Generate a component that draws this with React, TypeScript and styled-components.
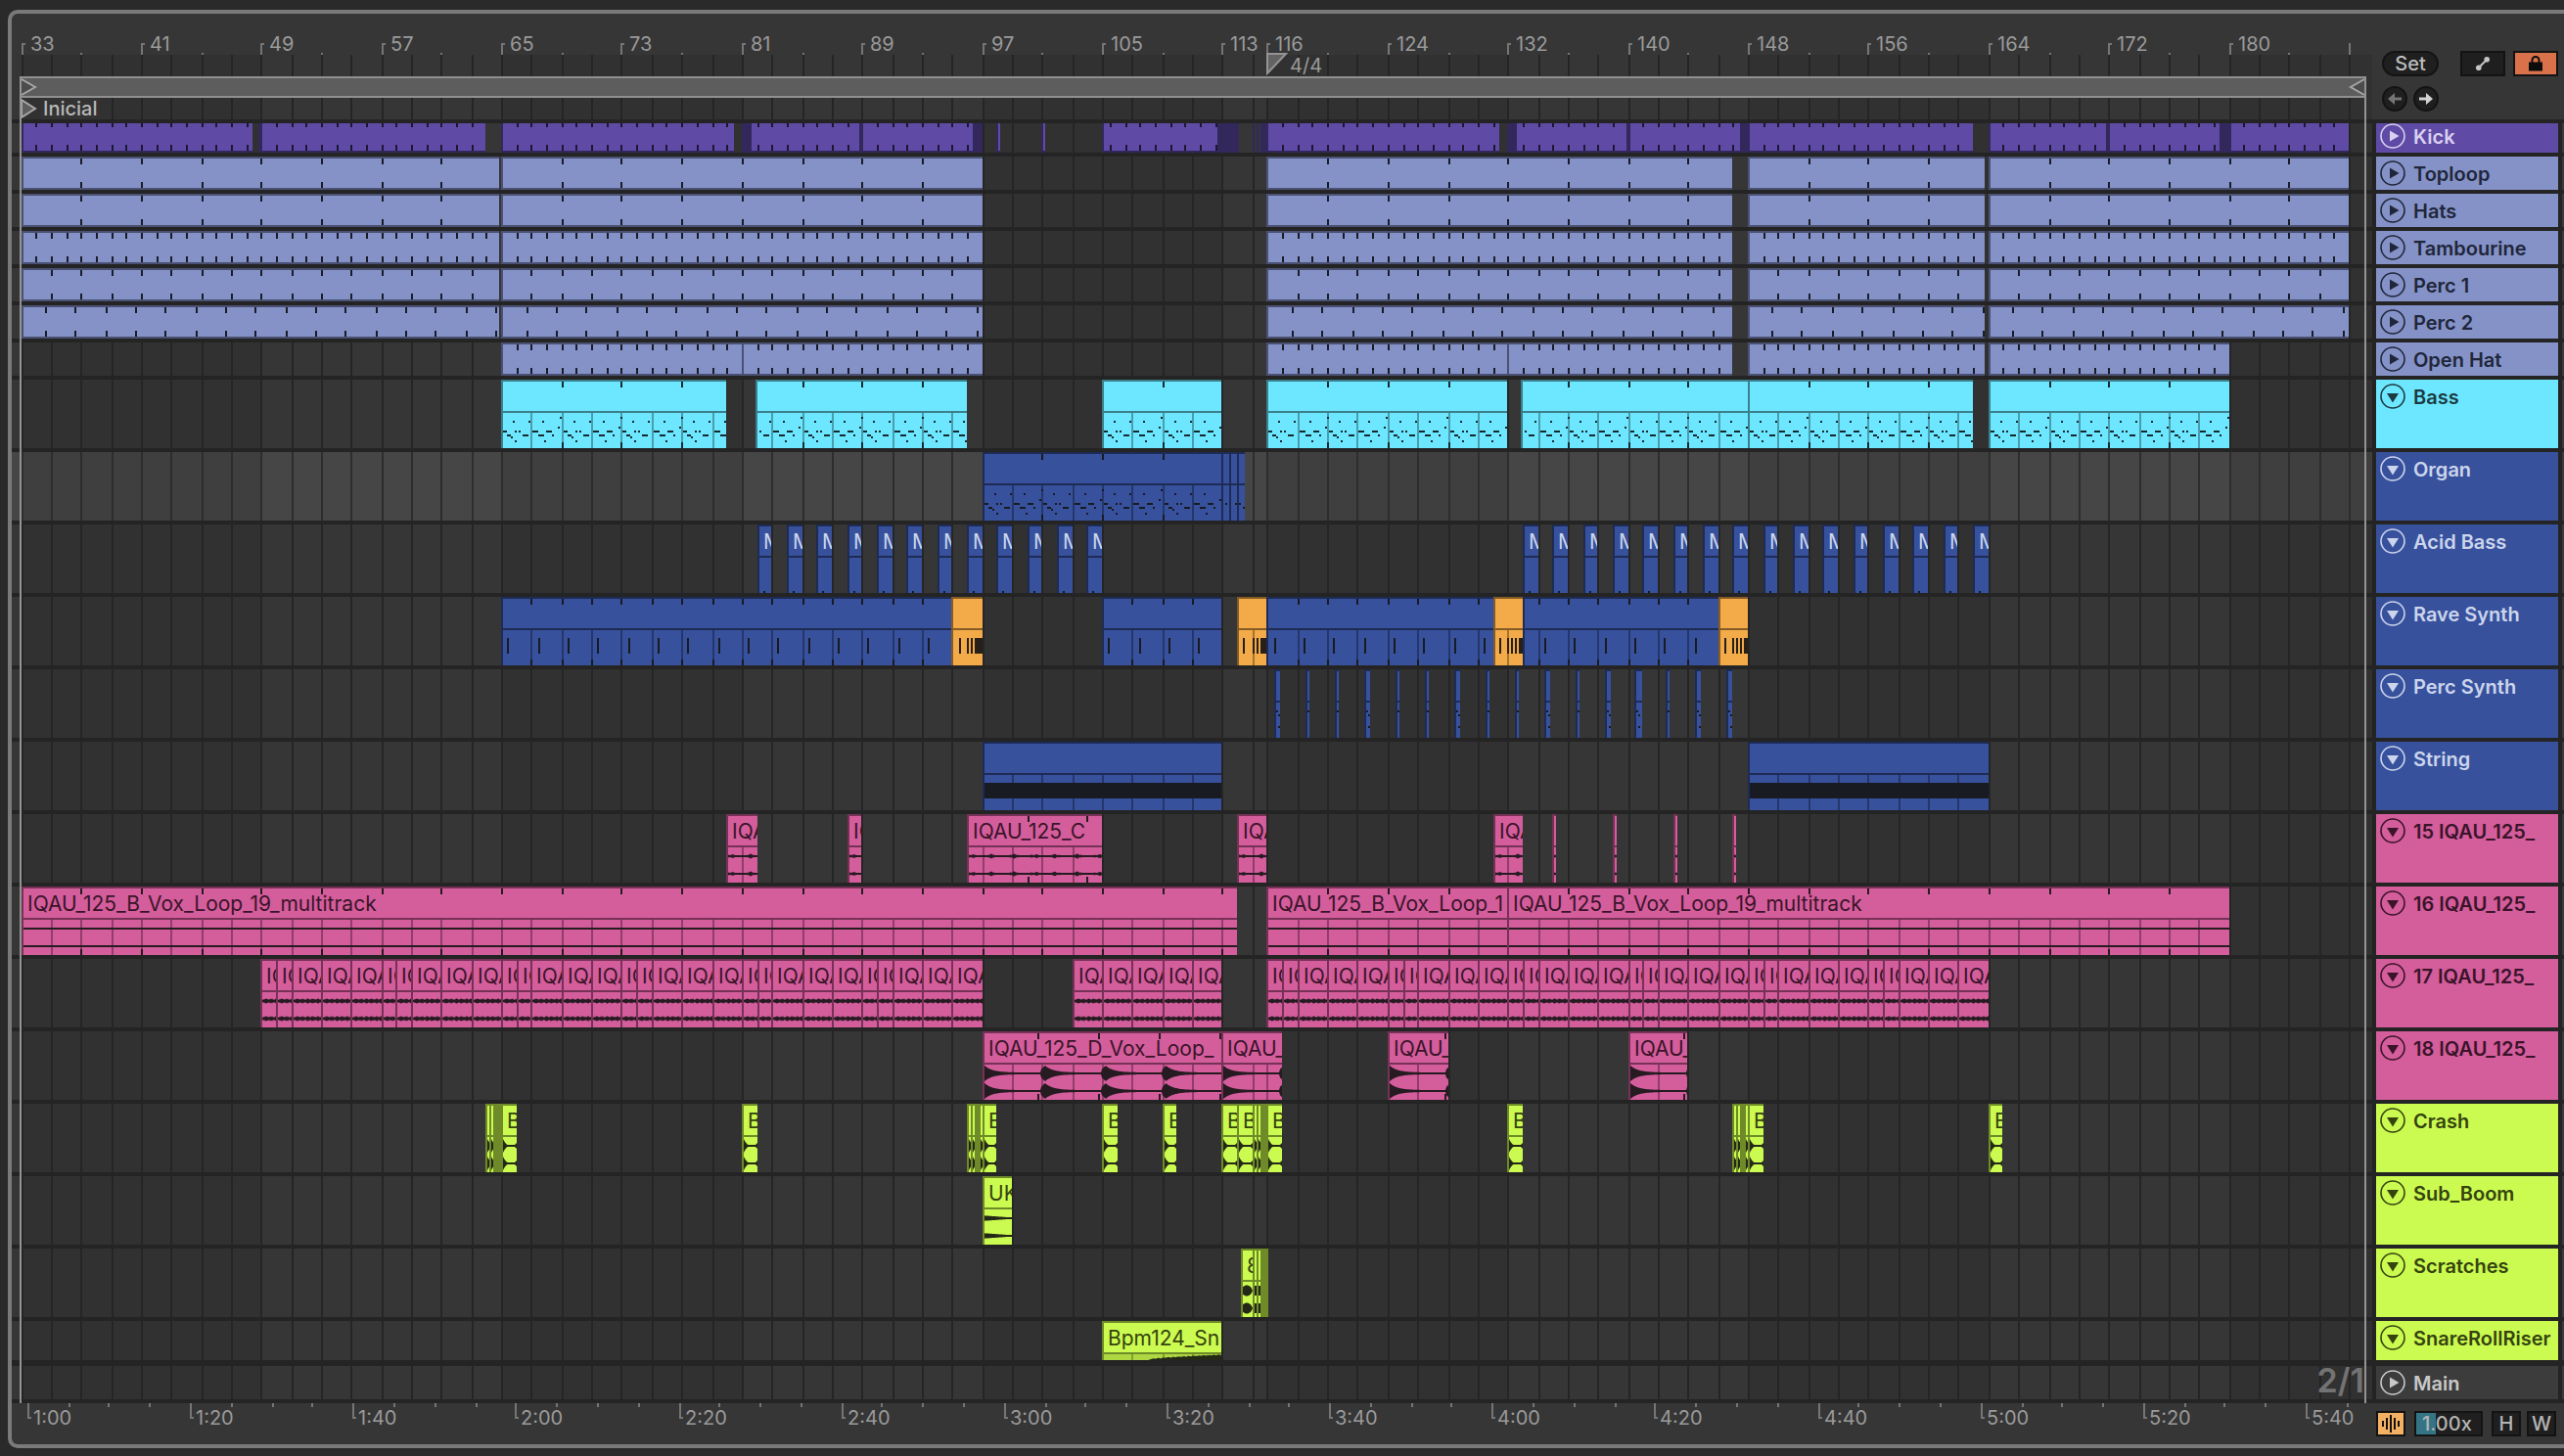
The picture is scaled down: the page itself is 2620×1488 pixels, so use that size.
import React, { createContext, useContext, useLayoutEffect, useRef, useState } from 'react';
import styled, { createGlobalStyle } from 'styled-components';

/* ---------- palette ---------- */

type Hue = 'purple' | 'lavender' | 'cyan' | 'blue' | 'orange' | 'pink' | 'lime' | 'grey';

const HUES: Record<Hue, { fill: string; edge: string; text: string; ink: string }> = {
  purple: { fill: '#5f4ba6', edge: '#33285c', text: '#d9d0f0', ink: '#1b1730' },
  lavender: { fill: '#8592c7', edge: '#4a5172', text: '#20263a', ink: '#181c28' },
  cyan: { fill: '#6de7ff', edge: '#3a7f8c', text: '#1b3b42', ink: '#16292e' },
  blue: { fill: '#37519d', edge: '#1d2b55', text: '#ccd5ec', ink: '#191b22' },
  orange: { fill: '#f3aa48', edge: '#855c24', text: '#3b2a12', ink: '#262019' },
  pink: { fill: '#d45d9c', edge: '#763156', text: '#3a1429', ink: '#251b20' },
  lime: { fill: '#cbfb50', edge: '#6f8a28', text: '#35430f', ink: '#242817' },
  grey: { fill: '#3c3c3c', edge: '#242424', text: '#c8c8c8', ink: '#c8c8c8' },
};

const FONT = 'Inter, "Liberation Sans", sans-serif';

/* ---------- time axis ---------- */

const FIRST_BAR = 33;
const VISIBLE_BARS = 156.5;
const LEAD_IN = 10;
const SIDE_WIDTH = 196;

const snap = (v: number) => 2 * Math.floor(v / 2);
const Axis = createContext<{ x: (bar: number) => number; width: number }>({ x: (b) => b, width: 0 });

const range = (from: number, to: number, step: number) => {
  const out: number[] = [];
  for (let v = from; v < to - 0.001; v += step) out.push(v);
  return out;
};

const GRID_BARS = [...range(33, 116, 2), ...range(116, 189, 2)];
const LIGHT_BANDS: [number, number][] = [
  [49, 65],
  [81, 97],
  [113, 116],
  [132, 148],
  [164, 180],
];

/* ---------- clips ---------- */

type Art =
  | 'none'
  | 'riff'
  | 'dot'
  | 'stab'
  | 'roll'
  | 'blips'
  | 'drone'
  | 'vox'
  | 'flat'
  | 'chop'
  | 'burst'
  | 'crash'
  | 'boom'
  | 'blob'
  | 'rise';

interface Clip {
  from: number;
  to: number;
  label?: string;
  hue?: Hue;
  art?: Art;
  step?: number;
  anchor?: number;
  marks?: number[];
  stub?: boolean;
}

interface Track {
  name: string;
  hue: Hue;
  height: number;
  folded?: boolean;
  selected?: boolean;
  lift?: number;
  clips: Clip[];
}

const spans = (pairs: [number, number][], extra: Partial<Clip> = {}): Clip[] =>
  pairs.map(([from, to]) => ({ from, to, ...extra }));

const LOOP_SPANS: [number, number][] = [
  [33, 64.9],
  [65, 97],
  [116, 147],
  [148, 163.75],
  [164, 188],
];

const kickClips: Clip[] = [
  ...spans(
    [
      [33, 48.5],
      [49, 64],
      [65, 80.5],
      [89, 96.4],
      [116, 131.5],
      [140, 147.45],
      [148, 163],
      [164, 171.8],
      [172, 179.4],
      [180, 188],
    ],
    { step: 1 }
  ),
  { from: 81.5, to: 88.8, step: 1, anchor: 81 },
  { from: 132.5, to: 139.9, step: 1, anchor: 132 },
  { from: 105, to: 112.65, step: 1, anchor: 104.5 },
  { from: 97.9, to: 98.2 },
  { from: 101, to: 101.2 },
  ...spans(
    [
      [48.8, 49],
      [81, 81.5],
      [88.8, 89],
      [96.4, 97],
      [112.65, 114.1],
      [115, 115.1],
      [115.25, 115.4],
      [115.5, 116],
      [132, 132.5],
      [139.9, 140],
      [147.45, 148],
      [171.8, 172],
      [179.4, 180],
    ],
    { stub: true }
  ),
];

const perc2Clips: Clip[] = LOOP_SPANS.map(([from, to]) => ({
  from,
  to,
  step: 2,
  anchor: from + (from < 148 ? 1.62 : 1.58) - 2,
}));

const rollMarks = [
  [8, 16, 20, 24, 26, 28, 30],
  [6, 16, 20, 24, 26, 28],
  [6, 14, 18, 22, 26, 28],
  [6, 14, 18, 22, 26, 28],
];

const raveClips: Clip[] = [
  { from: 65, to: 95, art: 'stab', step: 2 },
  { from: 95, to: 97, hue: 'orange', art: 'roll', marks: rollMarks[0] },
  { from: 105, to: 113, art: 'stab', step: 2 },
  { from: 114, to: 116, hue: 'orange', art: 'roll', marks: rollMarks[1] },
  { from: 116, to: 131, art: 'stab', step: 2 },
  { from: 131, to: 133, hue: 'orange', art: 'roll', marks: rollMarks[2] },
  { from: 133, to: 146, art: 'stab', step: 2, anchor: 132 },
  { from: 146, to: 148, hue: 'orange', art: 'roll', marks: rollMarks[3] },
];

const WIDE_BLIPS = [0, 3, 6, 9, 11, 12, 14, 15];
const blipClips: Clip[] = range(0, 16, 1).map((i) => ({
  from: 116.5 + i * 2,
  to: 116.5 + i * 2 + (WIDE_BLIPS.includes(i) ? 0.4 : 0.27),
  art: 'blips',
}));

const chopStarts = (from: number, to: number) => {
  const edges = range(from, to, 8).flatMap((b) => [b, b + 1, b + 2, b + 4, b + 6]);
  return edges.map((b, i): [number, number] => [b, edges[i + 1] ?? to]);
};

const chops = (pairs: [number, number][]): Clip[] =>
  pairs.map(([from, to]) => ({ from, to, art: 'chop', label: to - from > 1 ? 'IQA' : 'IQ' }));

const hits = (bars: number[]): Clip[] => bars.map((b) => ({ from: b, to: b + 1, label: 'B', art: 'crash' }));
const flam = (bar: number): Clip[] => [
  { from: bar, to: bar + 0.25, art: 'crash' },
  { from: bar + 0.25, to: bar + 0.5, art: 'crash' },
  { from: bar + 0.5, to: bar + 0.8, stub: true },
  { from: bar + 0.8, to: bar + 1, art: 'crash' },
];

const VOX_B = 'IQAU_125_B_Vox_Loop_19_multitrack';

const TRACKS: Track[] = [
  { name: 'Kick', hue: 'purple', height: 30, lift: 4, folded: true, clips: kickClips },
  { name: 'Toploop', hue: 'lavender', height: 34, folded: true, clips: spans(LOOP_SPANS, { step: 4 }) },
  { name: 'Hats', hue: 'lavender', height: 34, folded: true, clips: spans(LOOP_SPANS, { step: 4 }) },
  { name: 'Tambourine', hue: 'lavender', height: 34, folded: true, clips: spans(LOOP_SPANS, { step: 1 }) },
  { name: 'Perc 1', hue: 'lavender', height: 34, folded: true, clips: spans(LOOP_SPANS, { step: 2 }) },
  { name: 'Perc 2', hue: 'lavender', height: 34, folded: true, clips: perc2Clips },
  {
    name: 'Open Hat',
    hue: 'lavender',
    height: 34,
    folded: true,
    clips: spans(
      [
        [65, 81],
        [81, 97],
        [116, 132],
        [132, 147],
        [148, 163.75],
        [164, 180],
      ],
      { step: 1 }
    ),
  },
  {
    name: 'Bass',
    hue: 'cyan',
    height: 70,
    clips: [
      ...spans(
        [
          [65, 80],
          [105, 113],
          [116, 132],
          [148, 163],
          [164, 180],
        ],
        { step: 4, art: 'riff' }
      ),
      { from: 81.9, to: 96, step: 4, anchor: 81, art: 'riff' },
      { from: 132.9, to: 148, step: 4, anchor: 132, art: 'riff' },
    ],
  },
  {
    name: 'Organ',
    hue: 'blue',
    height: 70,
    selected: true,
    clips: [
      { from: 97, to: 113, step: 4, art: 'riff' },
      { from: 113, to: 113.5, art: 'riff', anchor: 112 },
      { from: 113.5, to: 114, art: 'riff', anchor: 111.7 },
      { from: 114, to: 114.5, art: 'riff', anchor: 113 },
    ],
  },
  {
    name: 'Acid Bass',
    hue: 'blue',
    height: 70,
    clips: [...range(82, 105, 2), ...range(133, 164, 2)].map((b) => ({
      from: b,
      to: b + 1,
      label: 'M',
      art: 'dot' as Art,
    })),
  },
  { name: 'Rave Synth', hue: 'blue', height: 70, clips: raveClips },
  { name: 'Perc Synth', hue: 'blue', height: 70, clips: blipClips },
  {
    name: 'String',
    hue: 'blue',
    height: 70,
    clips: spans(
      [
        [97, 113],
        [148, 164],
      ],
      { art: 'drone' }
    ),
  },
  {
    name: '15 IQAU_125_',
    hue: 'pink',
    height: 70,
    clips: [
      { from: 88, to: 89, label: 'IQ', art: 'vox' },
      { from: 96, to: 105, label: 'IQAU_125_C', art: 'vox', step: 4 },
      ...spans(
        [
          [80, 82],
          [114, 116],
          [131, 133],
        ],
        { label: 'IQA', art: 'vox' }
      ),
      ...[135, 139, 143, 147].map((b) => ({ from: b, to: b + 0.27, art: 'vox' as Art })),
    ],
  },
  {
    name: '16 IQAU_125_',
    hue: 'pink',
    height: 70,
    clips: [
      { from: 33, to: 114, label: VOX_B, art: 'flat', step: 4 },
      { from: 116, to: 132, label: 'IQAU_125_B_Vox_Loop_1', art: 'flat', step: 4 },
      { from: 132, to: 180, label: VOX_B, art: 'flat', step: 4 },
    ],
  },
  {
    name: '17 IQAU_125_',
    hue: 'pink',
    height: 70,
    clips: chops([
      ...chopStarts(49, 97),
      ...range(103, 113, 2).map((b): [number, number] => [b, b + 2]),
      ...chopStarts(116, 164),
    ]),
  },
  {
    name: '18 IQAU_125_',
    hue: 'pink',
    height: 70,
    clips: [
      { from: 97, to: 113, label: 'IQAU_125_D_Vox_Loop_', art: 'burst', step: 4.03, anchor: 96.68 },
      { from: 113, to: 117, label: 'IQAU_', art: 'burst' },
      { from: 124, to: 128, label: 'IQAU_', art: 'burst', step: 4, anchor: 123.75 },
      { from: 140, to: 144, label: 'IQAU_', art: 'burst', step: 4, anchor: 139.7 },
    ],
  },
  {
    name: 'Crash',
    hue: 'lime',
    height: 70,
    clips: [
      ...[64, 96, 115, 147].flatMap(flam),
      ...hits([65, 81, 97, 105, 109, 113, 114, 116, 132, 148, 164]),
    ],
  },
  { name: 'Sub_Boom', hue: 'lime', height: 70, clips: [{ from: 97, to: 99, label: 'UK', art: 'boom' }] },
  {
    name: 'Scratches',
    hue: 'lime',
    height: 70,
    clips: [
      { from: 114.2, to: 115, label: '8', art: 'blob' },
      { from: 115, to: 115.25, art: 'blob' },
      { from: 115.25, to: 115.5, art: 'blob' },
      { from: 115.5, to: 116.1, stub: true },
    ],
  },
  {
    name: 'SnareRollRiser',
    hue: 'lime',
    height: 40,
    clips: [{ from: 105, to: 113, label: 'Bpm124_Sn', art: 'rise' }],
  },
];

/* ---------- page ---------- */

const GlobalStyle = createGlobalStyle`
  *, *::before, *::after { box-sizing: border-box; }
  body { margin: 0; background: #2a2a2a; font-family: ${FONT}; }
`;

const Page = styled.main`
  min-height: 100vh;
  padding: 10px 0 8px 8px;
  overflow: hidden;
`;

const Frame = styled.div`
  border: 4px solid #7a7a7a;
  border-right: 0;
  border-radius: 10px 0 0 10px;
  background: #363636;
  overflow: hidden;
`;

const Arrangement = styled.section`
  position: relative;
`;

const Split = styled.div`
  display: flex;
`;

const TimeColumn = styled.div`
  flex: 1;
  min-width: 0;
`;

const RangeLine = styled.i`
  position: absolute;
  top: 64px;
  bottom: 0;
  width: 2px;
  background: #939393;
`;

/* ---------- rulers ---------- */

const BeatRuler = styled.div`
  position: relative;
  height: 64px;
  padding-top: 42px;
`;

const Strip = styled.div`
  position: relative;
  height: 22px;
`;

const LoopStrip = styled(Strip)`
  padding-left: 8px;
`;

const LoopBrace = styled.div`
  position: relative;
  display: flex;
  justify-content: space-between;
  height: 22px;
  border-top: 2px solid #909090;
  border-bottom: 2px solid #909090;
  background: #5d5d5d;
`;

const Overlay = styled.svg`
  position: absolute;
  top: 0;
  left: 0;
  width: 100%;
  height: 100%;
  display: block;
`;

const RulerLabel = styled.span<{ $top: number }>`
  position: absolute;
  top: ${(p) => p.$top}px;
  font-size: 20px;
  line-height: 24px;
  color: #9a9a9a;
  white-space: nowrap;
`;

const Locator = styled.div`
  position: relative;
  display: flex;
  align-items: center;
  gap: 4px;
  height: 22px;
  padding-left: 10px;
`;

const LocatorName = styled.span`
  padding: 0 2px;
  font-size: 20px;
  font-weight: 500;
  line-height: 22px;
  color: #b8b8b8;
  background: #333333;
`;

const TimeRuler = styled.div`
  position: relative;
  flex: 1;
  height: 42px;
`;

/* ---------- side panel ---------- */

const SideTop = styled.div`
  display: flex;
  flex-direction: column;
  gap: 10px;
  width: ${SIDE_WIDTH}px;
  padding: 38px 6px 8px 10px;
`;

const ButtonRow = styled.div<{ $gap: number }>`
  display: flex;
  gap: ${(p) => p.$gap}px;
`;

const PillButton = styled.button`
  width: 58px;
  height: 26px;
  margin-right: auto;
  padding: 0;
  border: 2px solid #131313;
  border-radius: 13px;
  background: #1f1f1f;
  color: #bdbdbd;
  font: 500 20px/22px ${FONT};
`;

const BoxButton = styled.button<{ $width: number; $active?: string }>`
  display: flex;
  align-items: center;
  justify-content: center;
  width: ${(p) => p.$width}px;
  height: 26px;
  padding: 0;
  border: 2px solid #131313;
  background: ${(p) => p.$active ?? '#1f1f1f'};
  color: #b5b5b5;
  font: 500 20px/22px ${FONT};
`;

const RoundButton = styled.button`
  display: flex;
  align-items: center;
  justify-content: center;
  width: 26px;
  height: 26px;
  padding: 0;
  border: 2px solid #131313;
  border-radius: 50%;
  background: #1f1f1f;
`;

const SideBottom = styled.div`
  display: flex;
  width: ${SIDE_WIDTH}px;
  padding: 8px 8px 0 4px;
  justify-content: space-between;
`;

const ZoomField = styled.input`
  width: 70px;
  height: 26px;
  padding: 0 0 0 6px;
  border: 2px solid #131313;
  border-radius: 0;
  outline: 0;
  background: linear-gradient(90deg, #347485 20px, #1f1f1f 20px);
  color: #b5b5b5;
  font: 500 20px/22px ${FONT};
`;

/* ---------- tracks ---------- */

const TrackList = styled.div`
  display: flex;
  flex-direction: column;
  gap: 4px;
  padding: 4px 0;
  background: #242424;
`;

const Row = styled.div<{ $height: number; $apart?: boolean }>`
  display: flex;
  height: ${(p) => p.$height}px;
  margin-top: ${(p) => (p.$apart ? 2 : 0)}px;
`;

const Lane = styled.div`
  position: relative;
  flex: 1;
  min-width: 0;
  overflow: hidden;
`;

const Lift = styled.div<{ $by: number }>`
  position: absolute;
  inset: ${(p) => -p.$by}px 0 0 0;
`;

const TrackHead = styled.div<{ $hue: Hue; $lift: number }>`
  display: flex;
  align-items: flex-start;
  gap: 8px;
  width: 186px;
  margin: 0 4px;
  padding: ${(p) => 4 - p.$lift}px 0 0 4px;
  overflow: hidden;
  background: ${(p) => HUES[p.$hue].fill};
  color: ${(p) => HUES[p.$hue].text};
`;

const RowEnd = styled.div`
  width: 2px;
  background: #3a3a3a;
`;

const FoldButton = styled.button`
  flex: none;
  width: 26px;
  height: 26px;
  padding: 0;
  border: 0;
  background: none;
  color: inherit;
`;

const TrackName = styled.span`
  font-size: 20px;
  font-weight: 600;
  line-height: 28px;
  white-space: nowrap;
`;

const ZoomRatio = styled.span`
  position: absolute;
  right: 8px;
  top: 0;
  font-size: 34px;
  font-weight: 600;
  line-height: 30px;
  color: #737373;
`;

const ClipBox = styled.div<{ $hue: Hue; $tall: boolean; $stub?: boolean }>`
  position: absolute;
  top: 0;
  height: ${(p) => (p.$tall ? 70 : 34)}px;
  overflow: hidden;
  border: solid ${(p) => HUES[p.$hue].edge};
  border-width: ${(p) => (p.$tall ? '2px 0 0 2px' : '2px 0 2px 2px')};
  background: ${(p) => (p.$stub ? HUES[p.$hue].edge : HUES[p.$hue].fill)};
`;

const ClipTitle = styled.div<{ $hue: Hue }>`
  height: 32px;
  padding-left: 4px;
  overflow: hidden;
  border-bottom: 2px solid ${(p) => HUES[p.$hue].edge};
  color: ${(p) => HUES[p.$hue].text};
  font-size: 21px;
  line-height: 31px;
  white-space: nowrap;
`;

const ClipArt = styled.svg`
  position: absolute;
  top: -2px;
  left: -2px;
  display: block;
`;

/* ---------- clip drawings ---------- */

const RIFF: [number, number, number][][] = [
  [
    [2, 53, 4], [14, 53, 2], [18, 53, 2], [6, 57, 4], [22, 57, 6], [10, 59, 2], [12, 43, 2], [28, 43, 2], [14, 63, 2],
  ],
  [
    [2, 53, 6], [16, 53, 6], [8, 57, 6], [22, 57, 2], [12, 43, 2], [14, 63, 2], [28, 49, 2], [30, 39, 2],
  ],
];

const ripple = (p: number) => Math.abs(Math.sin(p * 1.7) * Math.sin(p * 0.61 + 1));

const envelope = (art: Art, w: number, scale: number): ((p: number) => number) | null => {
  switch (art) {
    case 'flat':
      return () => 1;
    case 'vox':
      return (p) => 1 + 1.6 * Math.max(0, Math.sin(p * 0.29 + 0.3)) * ripple(p * 0.4 + 2);
    case 'chop':
      return (p) => (p < 3 ? 0.8 : 1.2 + 1.8 * ripple(p));
    case 'burst':
      return (p) => {
        const t = (p + 2) % (4.03 * scale);
        return 1 + (t < 4 ? 3 + t : 7 * Math.exp(-(t - 4) / 8));
      };
    case 'crash':
      return (p) => {
        const left = p < 7 ? 6 * Math.pow((7 - p) / 5, 1.8) : 0;
        const right = w - p < 2 && w > 8 ? 2 - (w - p) : 0;
        return 1 + left + right;
      };
    case 'boom':
      return (p) => 1 + 1.8 * Math.max(0, 1 - p / 26);
    case 'blob':
      return (p) => (w > 8 ? Math.sqrt(Math.max(0, 30 - (p - 6) * (p - 6))) : 5);
    case 'rise':
      return (p) => (p < 48 ? 0.5 : 3 + 5 * Math.pow((p - 48) / 72, 0.6) + ripple(p));
    default:
      return null;
  }
};

const wavePath = (amp: (p: number) => number, w: number, centre: number) => {
  const xs = range(2, w + 1, 1);
  const up = xs.map((p) => `${p} ${(centre - amp(p)).toFixed(1)}`);
  const down = [...xs].reverse().map((p) => `${p} ${(centre + amp(p)).toFixed(1)}`);
  return `M${up.join('L')}L${down.join('L')}Z`;
};

const boxes = (list: [number, number, number, number][]) =>
  list.map(([x, y, w, h]) => `M${x} ${y}h${w}v${h}h${-w}z`).join('');

function ClipView({ clip, hue, tall }: { clip: Clip; hue: Hue; tall: boolean }) {
  const { x } = useContext(Axis);
  const tone = clip.hue ?? hue;
  const left = x(clip.from);
  const width = Math.max(2, x(clip.to) - left);
  const scale = (x(189) - x(33)) / 156;
  const art = clip.art ?? 'none';
  const place = { left, width };

  if (clip.stub) return <ClipBox $hue={tone} $tall={tall} $stub style={place} />;

  const inner = (bar: number) => x(bar) - left;
  const anchor = clip.anchor ?? clip.from;
  const ticks = clip.step
    ? range(anchor + clip.step, clip.to, clip.step).filter((b) => b > clip.from + 0.2).map(inner)
    : [];
  const grid = tall ? GRID_BARS.filter((b) => b > clip.from && b < clip.to).map(inner) : [];
  const height = tall ? 70 : 34;
  const footY = tall ? 64 : 26;
  const notes: [number, number, number, number][] = [];

  if (art === 'riff') {
    range(anchor, clip.to, 2).forEach((b, i) => {
      RIFF[i % 2].forEach(([nx, ny, nw]) => {
        if (inner(b) + nx >= 2) notes.push([inner(b) + nx, ny - 1, nw, 2]);
      });
    });
  }
  if (art === 'stab') {
    range(anchor + 0.42, clip.to, 2).forEach((b) => {
      if (inner(b) > 2) notes.push([inner(b), 42, 2, 16]);
    });
  }
  if (art === 'roll') {
    clip.marks?.forEach((m) => notes.push([m, 42, 2, 16]));
  }
  if (art === 'dot') notes.push([6, 68, 2, 2]);
  if (art === 'blips') notes.push([2, 42, 2, 2], [4, 46, 2, 2], [4, 58, 2, 2]);
  if (art === 'drone') notes.push([2, 42, width, 16]);

  const amp = envelope(art, width, scale);

  return (
    <ClipBox $hue={tone} $tall={tall} style={place}>
      {tall && <ClipTitle $hue={tone}>{clip.label}</ClipTitle>}
      <ClipArt width={width} height={height} aria-hidden="true">
        {art === 'rise' && <rect x="2" y="34" width={width} height="36" fill="#2a3a00" opacity=".18" />}
        <path d={boxes(grid.map((g) => [g, 34, 2, 36]))} fill={HUES[tone].edge} opacity=".7" />
        {amp && (
          <path d={wavePath(amp, width, 43) + wavePath(amp, width, 61)} fill={HUES[tone].ink} />
        )}
        <path
          d={boxes([
            ...notes,
            ...ticks.map((t): [number, number, number, number] => [t, 2, 2, 6]),
            ...ticks.map((t): [number, number, number, number] => [t, footY, 2, 6]),
          ])}
          fill={HUES[tone].ink}
          shapeRendering="crispEdges"
        />
      </ClipArt>
    </ClipBox>
  );
}

function LaneGrid({ top = 0, selected }: { top?: number; selected?: boolean }) {
  const { x, width } = useContext(Axis);
  const [dark, light, line] = selected ? ['#3f3f3f', '#464646', '#2d2d2d'] : ['#313131', '#363636', '#252525'];
  return (
    <Overlay aria-hidden="true" shapeRendering="crispEdges">
      <rect x="0" y={top} width={x(33)} height="100%" fill={light} />
      <rect x={x(33)} y={top} width={width} height="100%" fill={dark} />
      {LIGHT_BANDS.map(([a, b]) => (
        <rect key={a} x={x(a)} y={top} width={x(b) - x(a)} height="100%" fill={light} />
      ))}
      {GRID_BARS.map((b) => (
        <rect key={b} x={x(b)} y={top} width="2" height="100%" fill={line} />
      ))}
    </Overlay>
  );
}

function FoldIcon({ folded }: { folded?: boolean }) {
  return (
    <svg width="26" height="26" viewBox="0 0 26 26" aria-hidden="true">
      <circle cx="13" cy="13" r="12" fill="none" stroke="currentColor" strokeWidth="1.6" />
      <path d={folded ? 'M10 7.5L19.5 13L10 18.5Z' : 'M7 10H19L13 19.5Z'} fill="currentColor" />
    </svg>
  );
}

function TrackRow({ track }: { track: Track }) {
  const tall = track.height >= 40;
  const lift = track.lift ?? 0;
  return (
    <Row $height={track.height}>
      <Lane>
        <LaneGrid selected={track.selected} />
        <Lift $by={lift}>
          {track.clips.map((clip, i) => (
            <ClipView key={i} clip={clip} hue={track.hue} tall={tall} />
          ))}
        </Lift>
      </Lane>
      <TrackHead $hue={track.hue} $lift={lift}>
        <FoldButton aria-label={`Fold ${track.name}`}>
          <FoldIcon folded={track.folded} />
        </FoldButton>
        <TrackName>{track.name}</TrackName>
      </TrackHead>
      <RowEnd />
    </Row>
  );
}

/* ---------- ruler contents ---------- */

const LABEL_BARS = [...range(33, 114, 8), ...range(116, 181, 8)];
const HALF_BARS = [...range(37, 113, 8), ...range(120, 185, 8)];

function BeatRulerView() {
  const { x } = useContext(Axis);
  return (
    <BeatRuler>
      <LaneGrid top={42} />
      <Overlay aria-hidden="true" shapeRendering="crispEdges">
        <g fill="#757575">
          {LABEL_BARS.map((b) => (
            <path key={b} d={`M${x(b)} 30h4v2h-2v10h-2z`} />
          ))}
          {HALF_BARS.map((b) => (
            <rect key={b} x={x(b)} y="40" width="2" height="2" />
          ))}
          <rect x={x(188)} y="30" width="2" height="12" />
        </g>
      </Overlay>
      <Overlay aria-hidden="true">
        <path d={`M${x(116) + 1} 41h19l-19 20z`} fill="#636363" stroke="#949494" strokeWidth="2" />
      </Overlay>
      {LABEL_BARS.map((b) => (
        <RulerLabel key={b} $top={19} style={{ left: x(b) + 9 }}>
          {b}
        </RulerLabel>
      ))}
      <RulerLabel $top={41} style={{ left: x(116) + 24 }}>
        4/4
      </RulerLabel>
    </BeatRuler>
  );
}

const secondsToBar = (s: number) => 33.44 + (s - 60) * 0.5418;
const clock = (s: number) => `${Math.floor(s / 60)}:${String(s % 60).padStart(2, '0')}`;

function TimeRulerView() {
  const { x } = useContext(Axis);
  return (
    <TimeRuler>
      <Overlay aria-hidden="true" shapeRendering="crispEdges">
        <g fill="#757575">
          {range(60, 346, 5).map((s) => {
            const px = x(secondsToBar(s));
            return <path key={s} d={s % 20 === 0 ? `M${px} 0h2v14h2v2h-4z` : `M${px} 0h2v4h-2z`} />;
          })}
        </g>
      </Overlay>
      {range(60, 341, 20).map((s) => (
        <RulerLabel key={s} $top={3} style={{ left: x(secondsToBar(s)) + 6 }}>
          {clock(s)}
        </RulerLabel>
      ))}
    </TimeRuler>
  );
}

export default function App() {
  const ruler = useRef<HTMLDivElement>(null);
  const [width, setWidth] = useState(2412);

  useLayoutEffect(() => {
    const node = ruler.current;
    if (!node) return;
    const measure = () => setWidth(node.clientWidth);
    measure();
    const observer = new ResizeObserver(measure);
    observer.observe(node);
    return () => observer.disconnect();
  }, []);

  const scale = (width - LEAD_IN) / VISIBLE_BARS;
  const x = (bar: number) => snap(LEAD_IN + (bar - FIRST_BAR) * scale);

  return (
    <Axis.Provider value={{ x, width }}>
      <GlobalStyle />
      <Page>
        <Frame>
          <Arrangement>
            <Split>
              <TimeColumn ref={ruler}>
                <BeatRulerView />
                <LoopStrip>
                  <LaneGrid />
                  <LoopBrace style={{ width: x(189) - 6 }}>
                    <svg width="18" height="18" aria-hidden="true">
                      <path d="M2 1L16 9L2 17" fill="#4c4c4c" stroke="#a6a6a6" strokeWidth="2" />
                    </svg>
                    <svg width="18" height="18" aria-hidden="true">
                      <path d="M16 1L2 9L16 17" fill="#4c4c4c" stroke="#a6a6a6" strokeWidth="2" />
                    </svg>
                  </LoopBrace>
                </LoopStrip>
                <Strip>
                  <LaneGrid />
                  <Locator>
                    <svg width="16" height="20" aria-hidden="true">
                      <path d="M0 1L14 10L0 19Z" fill="#5d5d5d" stroke="#a6a6a6" strokeWidth="2" />
                    </svg>
                    <LocatorName>Inicial</LocatorName>
                  </Locator>
                </Strip>
              </TimeColumn>
              <SideTop>
                <ButtonRow $gap={8}>
                  <PillButton>Set</PillButton>
                  <BoxButton $width={46} aria-label="Automation mode">
                    <svg width="16" height="16" viewBox="0 0 16 16" aria-hidden="true">
                      <path d="M4 12L12 4" stroke="#c4c4c4" strokeWidth="2" />
                      <circle cx="3.8" cy="12.2" r="2.8" fill="#c4c4c4" />
                      <circle cx="12.2" cy="3.8" r="2.8" fill="#c4c4c4" />
                    </svg>
                  </BoxButton>
                  <BoxButton $width={46} $active="#d9714b" aria-label="Lock envelopes">
                    <svg width="14" height="16" viewBox="0 0 14 16" aria-hidden="true">
                      <path d="M3.5 7V4.5a3.5 3.5 0 0 1 7 0V7" fill="none" stroke="#0c0c0c" strokeWidth="2" />
                      <rect x="0" y="6.5" width="14" height="9" fill="#0c0c0c" />
                    </svg>
                  </BoxButton>
                </ButtonRow>
                <ButtonRow $gap={6}>
                  <RoundButton aria-label="Previous locator">
                    <svg width="16" height="14" viewBox="0 0 16 14" aria-hidden="true">
                      <path d="M8 1V5.6H15V8.4H8V13L1 7Z" fill="#757575" />
                    </svg>
                  </RoundButton>
                  <RoundButton aria-label="Next locator">
                    <svg width="16" height="14" viewBox="0 0 16 14" aria-hidden="true">
                      <path d="M8 1V5.6H1V8.4H8V13L15 7Z" fill="#d2d2d2" />
                    </svg>
                  </RoundButton>
                </ButtonRow>
              </SideTop>
            </Split>
            <TrackList>
              {TRACKS.map((track) => (
                <TrackRow key={track.name} track={track} />
              ))}
              <Row $height={34} $apart>
                <Lane>
                  <LaneGrid />
                  <ZoomRatio>2/1</ZoomRatio>
                </Lane>
                <TrackHead $hue="grey" $lift={0}>
                  <FoldButton aria-label="Fold Main">
                    <FoldIcon folded />
                  </FoldButton>
                  <TrackName>Main</TrackName>
                </TrackHead>
                <RowEnd />
              </Row>
            </TrackList>
            <RangeLine style={{ left: 8 }} />
            <RangeLine style={{ left: x(189) }} />
          </Arrangement>
          <Split>
            <TimeRulerView />
            <SideBottom>
              <BoxButton $width={30} $active="#f5b163" aria-label="Waveform zoom">
                <svg width="20" height="20" viewBox="0 0 20 20" aria-hidden="true">
                  <path
                    d="M2 7V13M6 4V16M10 1V19M14 4V16M18 7V13"
                    stroke="#14110c"
                    strokeWidth="2"
                  />
                </svg>
              </BoxButton>
              <ZoomField aria-label="Waveform vertical zoom" defaultValue="1.00x" />
              <ButtonRow $gap={6}>
                <BoxButton $width={30}>H</BoxButton>
                <BoxButton $width={30}>W</BoxButton>
              </ButtonRow>
            </SideBottom>
          </Split>
        </Frame>
      </Page>
    </Axis.Provider>
  );
}
